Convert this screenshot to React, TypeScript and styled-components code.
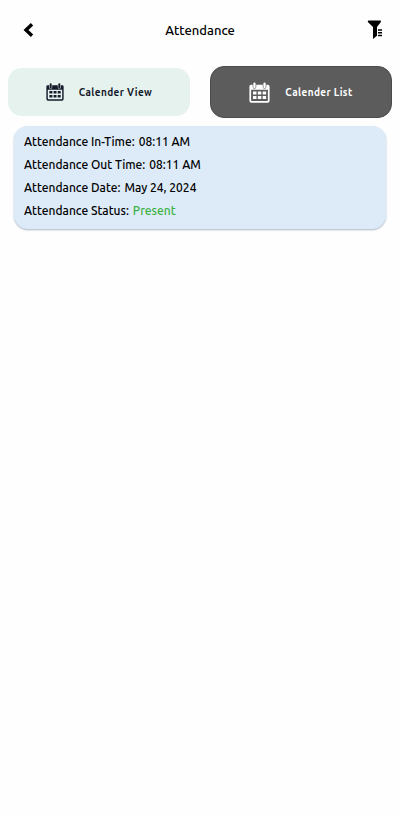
import React from "react";
import styled, { createGlobalStyle } from "styled-components";

const GlobalStyle = createGlobalStyle`
  * { box-sizing: border-box; }
  body {
    margin: 0;
    background: #fefefe;
    color: #000;
    font-family: Ubuntu, "Noto Sans", sans-serif;
  }
  button { font: inherit; color: inherit; border: 0; padding: 0; background: none; cursor: pointer; }
  svg { display: block; }
`;

const Header = styled.header`
  display: grid;
  grid-template-columns: 1fr auto 1fr;
  align-items: center;
  height: 59px;
  padding: 0 9px;
`;

const Title = styled.h1`
  margin: 0;
  font-size: 13px;
  line-height: 20px;
  font-weight: 500;
`;

const IconButton = styled.button<{ $side: "start" | "end" }>`
  display: grid;
  place-items: center;
  justify-self: ${(p) => p.$side};
  width: ${(p) => (p.$side === "start" ? 40 : 32)}px;
  height: 32px;
`;

const Switcher = styled.nav`
  display: grid;
  grid-template-columns: 1fr 1fr;
  align-items: center;
  gap: 20px;
  padding: 7px 8px 8px;
`;

const ViewButton = styled.button<{ $active?: boolean }>`
  && {
    display: flex;
    align-items: center;
    justify-content: center;
    gap: 15px;
    height: ${(p) => (p.$active ? 52 : 48)}px;
    border-radius: 14px;
    background: ${(p) => (p.$active ? "#5c5c5c" : "#e5f2ee")};
    border: ${(p) => (p.$active ? "1px solid #4b4b4b" : "0")};
    color: ${(p) => (p.$active ? "#fff" : "#151b2c")};
    font-size: 10px;
    line-height: 16px;
    font-weight: 700;
    letter-spacing: 0.04em;
  }
`;

const ButtonText = styled.span`
  padding-top: 2px;
`;

const Records = styled.main`
  padding: 0 14px 16px;
`;

const Record = styled.dl`
  display: grid;
  gap: 3px;
  margin: 0;
  padding: 6px 10px 8px;
  border-radius: 14px;
  background: #ddebf8;
  box-shadow: 0 1px 2px #a9b7c2;
  font-size: 12px;
  line-height: 20px;
  font-weight: 500;
`;

const Field = styled.div`
  display: flex;
  gap: 4px;
`;

const Label = styled.dt``;

const Value = styled.dd<{ $positive?: boolean }>`
  margin: 0;
  color: ${(p) => (p.$positive ? "#3bb143" : "inherit")};
`;

const BackIcon = () => (
  <svg width="12" height="16" viewBox="0 0 12 16" fill="none" aria-hidden="true">
    <path d="M9 2.2 3 8l6 5.8" stroke="#000" strokeWidth="3.4" />
  </svg>
);

const FilterIcon = () => (
  <svg width="16" height="20" viewBox="0 0 16 20" aria-hidden="true">
    <path d="M1.6 .6h11.6c.8 0 1 1 .5 1.6L10 7v8.8L6 19V7L1.1 2.200C.5 1.600.8.6 1.600.6Z" fill="#000" />
    <path d="M11 9.900h4M11 12.700h4M11 15.500h4" stroke="#000" strokeWidth="1.500" />
  </svg>
);

const CalendarIcon = ({ size, ring }: { size: number; ring: string }) => (
  <svg width={size} height={size} viewBox="0 0 20 20" aria-hidden="true">
    <path
      d="M2 2.6h16A1.6 1.6 0 0 1 19.6 4.2v13.6a1.9 1.9 0 0 1-1.9 1.9H2.3a1.9 1.9 0 0 1-1.9-1.9V4.2A1.6 1.6 0 0 1 2 2.6ZM2 7.4v9.900c0 .4.3.7.7.7h14.6c.4 0 .7-.3.7-.7V7.4Z"
      fill="currentColor"
      fillRule="evenodd"
    />
    <path d="M5.2 1.7v3M14.8 1.7v3" stroke={ring} strokeWidth="3.4" strokeLinecap="round" />
    <path d="M5.2 1.5v3.4M14.8 1.5v3.4" stroke="currentColor" strokeWidth="2.2" strokeLinecap="round" />
    <path
      d="M3.8 9h3.3v2.8H3.8zM8.4 9h3.3v2.8H8.4zM13 9h3.3v2.8H13zM3.8 13.3h3.3v2.8H3.8zM8.4 13.3h3.3v2.8H8.4zM13 13.3h3.3v2.8H13z"
      fill="currentColor"
    />
  </svg>
);

const record = [
  { label: "Attendance In-Time:", value: "08:11 AM" },
  { label: "Attendance Out Time:", value: "08:11 AM" },
  { label: "Attendance Date:", value: "May 24, 2024" },
  { label: "Attendance Status:", value: "Present", positive: true },
];

export default function App() {
  return (
    <>
      <GlobalStyle />
      <Header>
        <IconButton type="button" aria-label="Back" $side="start">
          <BackIcon />
        </IconButton>
        <Title>Attendance</Title>
        <IconButton type="button" aria-label="Filter" $side="end">
          <FilterIcon />
        </IconButton>
      </Header>
      <Switcher aria-label="Attendance view">
        <ViewButton type="button" aria-pressed={false}>
          <CalendarIcon size={18} ring="#e5f2ee" />
          <ButtonText>Calender View</ButtonText>
        </ViewButton>
        <ViewButton type="button" aria-pressed $active>
          <CalendarIcon size={21} ring="#5c5c5c" />
          <ButtonText>Calender List</ButtonText>
        </ViewButton>
      </Switcher>
      <Records>
        <Record>
          {record.map((field) => (
            <Field key={field.label}>
              <Label>{field.label}</Label>
              <Value $positive={field.positive}>{field.value}</Value>
            </Field>
          ))}
        </Record>
      </Records>
    </>
  );
}
